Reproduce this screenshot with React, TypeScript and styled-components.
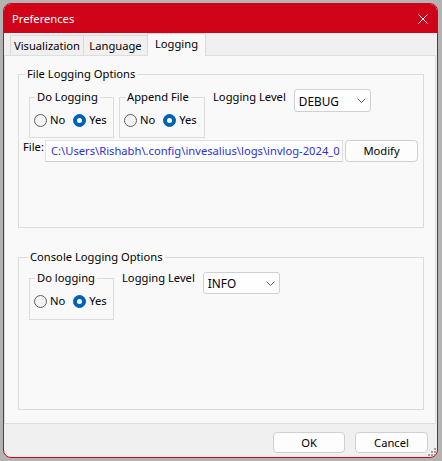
import React from "react";
import styled, { createGlobalStyle } from "styled-components";

const GlobalStyle = createGlobalStyle`
  html, body { margin: 0; padding: 0; }
  body {
    background: #b3b3b3;
    font-family: "Noto Sans", "Liberation Sans", sans-serif;
    font-size: 11.2px;
    color: #000;
  }
  #root {
    width: 442px;
    height: 461px;
    box-sizing: border-box;
    padding: 3px 0 0 3px;
    overflow: hidden;
  }
`;

const Window = styled.div`
  box-sizing: border-box;
  width: 435px;
  height: 455px;
  border: 1px solid #d00418;
  border-radius: 8px;
  overflow: hidden;
  background: #f0f0f0;
  display: flex;
  flex-direction: column;
`;

const TitleBar = styled.div`
  height: 29px;
  flex: none;
  background: #d00418;
  color: #fff;
  display: flex;
  align-items: center;
  justify-content: space-between;
  padding-left: 8px;
`;

const Title = styled.span`
  font-size: 11.2px;
  line-height: 16px;
`;

const CloseButton = styled.div`
  width: 28px;
  height: 29px;
  display: flex;
  align-items: center;
  justify-content: center;
`;

const TabRow = styled.div`
  height: 22px;
  flex: none;
  display: flex;
  align-items: flex-end;
  padding-left: 6px;
`;

const Tab = styled.div<{ $active?: boolean; $width: number }>`
  box-sizing: border-box;
  width: ${(p) => p.$width}px;
  height: ${(p) => (p.$active ? 23 : 20)}px;
  margin-bottom: ${(p) => (p.$active ? -1 : 0)}px;
  padding-bottom: ${(p) => (p.$active ? 2 : 0)}px;
  border: 1px solid #d9d9d9;
  border-bottom: none;
  background: ${(p) => (p.$active ? "#f9f9f9" : "#f0f0f0")};
  display: flex;
  align-items: center;
  justify-content: center;
  line-height: 16px;
  position: relative;
  z-index: ${(p) => (p.$active ? 1 : 0)};
  & + & {
    margin-left: -1px;
  }
`;

const Panel = styled.div`
  box-sizing: border-box;
  height: 369px;
  flex: none;
  margin-right: 1px;
  border: 1px solid #dedede;
  background: #f9f9f9;
  padding: 10px 0 0 13px;
  display: flex;
  flex-direction: column;
  gap: 21px;
`;

const Group = styled.fieldset<{ $height: number }>`
  box-sizing: border-box;
  margin: 0;
  padding: 0;
  min-width: 0;
  width: 406px;
  height: ${(p) => p.$height}px;
  border: 1px solid #dcdcdc;
`;

const GroupTitle = styled.legend<{ $indent: number }>`
  margin-left: ${(p) => p.$indent}px;
  padding: 0 2px;
  line-height: 16px;
`;

const GroupBody = styled.div<{ $top: number }>`
  padding-top: ${(p) => p.$top}px;
`;

const OptionsRow = styled.div`
  display: flex;
  align-items: flex-start;
  padding-left: 10px;
`;

const SubGroup = styled.fieldset<{ $width: number; $height: number }>`
  box-sizing: border-box;
  margin: 0;
  padding: 0;
  min-width: 0;
  width: ${(p) => p.$width}px;
  height: ${(p) => p.$height}px;
  border: 1px solid #dcdcdc;
  flex: none;
  & + & {
    margin-left: 5px;
  }
`;

const SubTitle = styled.legend`
  margin-left: 5px;
  padding: 0 2px;
  line-height: 16px;
`;

const RadioRow = styled.div`
  display: flex;
  align-items: center;
  gap: 8px;
  padding: 7px 0 0 4px;
`;

const RadioOption = styled.label`
  display: flex;
  align-items: center;
  gap: 3px;
  line-height: 16px;
`;

const RadioCircle = styled.span<{ $checked?: boolean }>`
  box-sizing: border-box;
  width: 13px;
  height: 13px;
  border-radius: 50%;
  border: 1px solid ${(p) => (p.$checked ? "#005fb8" : "#5f5f5f")};
  background: ${(p) => (p.$checked ? "#005fb8" : "#f4f4f4")};
  display: flex;
  align-items: center;
  justify-content: center;
  &::after {
    content: "";
    width: 5px;
    height: 5px;
    border-radius: 50%;
    background: #fff;
    display: ${(p) => (p.$checked ? "block" : "none")};
  }
`;

const FieldLabel = styled.span`
  margin: 0 8px;
  line-height: 16px;
  white-space: nowrap;
`;

const Combo = styled.div<{ $width: number; $height: number; $offset: number }>`
  box-sizing: border-box;
  width: ${(p) => p.$width}px;
  height: ${(p) => p.$height}px;
  margin-top: ${(p) => p.$offset}px;
  border: 1px solid #d0d0d0;
  border-radius: 3px;
  background: #fefefe;
  display: flex;
  align-items: center;
  justify-content: space-between;
  padding: 0 4px 0 4px;
  font-size: 11.8px;
  flex: none;
`;

const FileRow = styled.div`
  display: flex;
  align-items: flex-start;
  margin-top: 2px;
  padding-left: 4px;
`;

const FileLabel = styled.span`
  width: 22px;
  line-height: 16px;
  margin-top: -1px;
  flex: none;
`;

const PathField = styled.div`
  box-sizing: border-box;
  width: 298px;
  height: 22px;
  margin-right: 2px;
  border: 1px solid #e2e2e2;
  border-bottom-color: #cfcfcf;
  background: #fff;
  color: #2d2de0;
  padding-left: 5px;
  line-height: 20px;
  white-space: nowrap;
  overflow: hidden;
  flex: none;
`;

const Button = styled.button<{ $width: number; $height: number }>`
  box-sizing: border-box;
  width: ${(p) => p.$width}px;
  height: ${(p) => p.$height}px;
  padding: 0;
  border: 1px solid #d0d0d0;
  border-radius: 4px;
  background: #fdfdfd;
  font: inherit;
  color: #000;
  line-height: 16px;
  flex: none;
`;

const Footer = styled.div`
  flex: 1;
  position: relative;
  display: flex;
  justify-content: flex-end;
  align-items: flex-start;
  gap: 10px;
  padding: 8px 9px 0 0;
`;

const Grip = styled.svg`
  position: absolute;
  right: 1px;
  bottom: 1px;
`;

const Chevron = () => (
  <svg width="9" height="5" viewBox="0 0 9 5">
    <path d="M0.5 0.5 L4.5 4.5 L8.5 0.5" fill="none" stroke="#606060" strokeWidth="1" />
  </svg>
);

const Radio = ({ label, checked }: { label: string; checked?: boolean }) => (
  <RadioOption>
    <RadioCircle $checked={checked} />
    {label}
  </RadioOption>
);

const YesNo = () => (
  <RadioRow>
    <Radio label="No" />
    <Radio label="Yes" checked />
  </RadioRow>
);

export default function App() {
  return (
    <>
      <GlobalStyle />
      <Window>
        <TitleBar>
          <Title>Preferences</Title>
          <CloseButton>
            <svg width="10" height="10" viewBox="0 0 10 10">
              <path d="M0.5 0.5 L9.5 9.5 M9.5 0.5 L0.5 9.5" stroke="#fff" strokeWidth="1" />
            </svg>
          </CloseButton>
        </TitleBar>
        <TabRow>
          <Tab $width={74}>Visualization</Tab>
          <Tab $width={65}>Language</Tab>
          <Tab $width={59} $active>
            Logging
          </Tab>
        </TabRow>
        <Panel>
          <Group $height={162}>
            <GroupTitle $indent={6}>File Logging Options</GroupTitle>
            <GroupBody $top={7}>
              <OptionsRow>
                <SubGroup $width={85} $height={49}>
                  <SubTitle>Do Logging</SubTitle>
                  <YesNo />
                </SubGroup>
                <SubGroup $width={86} $height={49}>
                  <SubTitle>Append File</SubTitle>
                  <YesNo />
                </SubGroup>
                <FieldLabel>Logging Level</FieldLabel>
                <Combo $width={77} $height={23} $offset={0}>
                  DEBUG
                  <Chevron />
                </Combo>
              </OptionsRow>
              <FileRow>
                <FileLabel>File:</FileLabel>
                <PathField>C:\Users\Rishabh\.config\invesalius\logs\invlog-2024_0</PathField>
                <Button $width={73} $height={22}>
                  Modify
                </Button>
              </FileRow>
            </GroupBody>
          </Group>
          <Group $height={161}>
            <GroupTitle $indent={9}>Console Logging Options</GroupTitle>
            <GroupBody $top={5}>
              <OptionsRow>
                <SubGroup $width={85} $height={50}>
                  <SubTitle>Do logging</SubTitle>
                  <YesNo />
                </SubGroup>
                <FieldLabel>Logging Level</FieldLabel>
                <Combo $width={77} $height={22} $offset={2}>
                  INFO
                  <Chevron />
                </Combo>
              </OptionsRow>
            </GroupBody>
          </Group>
        </Panel>
        <Footer>
          <Button $width={72} $height={21}>
            OK
          </Button>
          <Button $width={73} $height={21}>
            Cancel
          </Button>
          <Grip width="8" height="8" viewBox="0 0 8 8">
            <rect x="6" y="0" width="2" height="2" fill="#a0a0a0" />
            <rect x="3" y="3" width="2" height="2" fill="#a0a0a0" />
            <rect x="6" y="3" width="2" height="2" fill="#a0a0a0" />
            <rect x="0" y="6" width="2" height="2" fill="#a0a0a0" />
            <rect x="3" y="6" width="2" height="2" fill="#a0a0a0" />
            <rect x="6" y="6" width="2" height="2" fill="#a0a0a0" />
          </Grip>
        </Footer>
      </Window>
    </>
  );
}
